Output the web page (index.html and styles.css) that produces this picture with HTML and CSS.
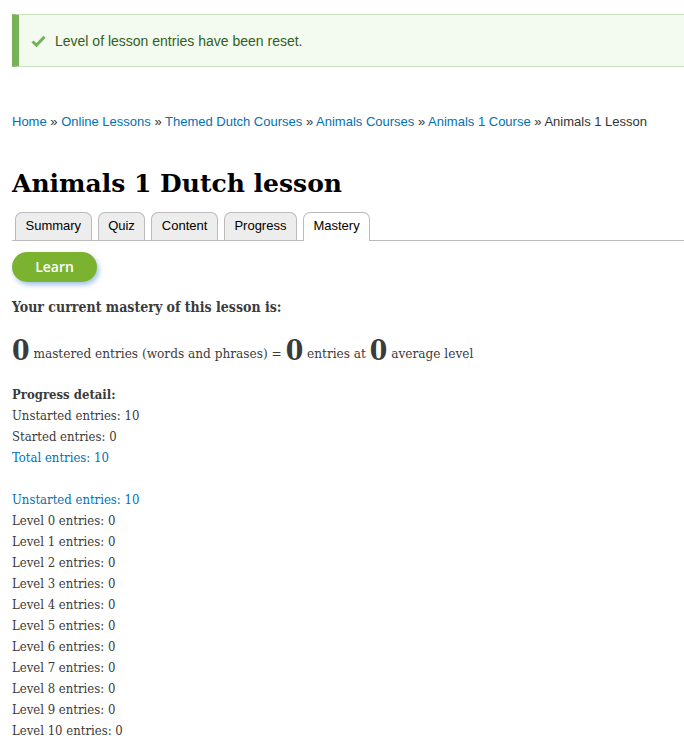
FILE: index.html
```html
<!DOCTYPE html>
<html>
<head>
<meta charset="utf-8">
<link rel="stylesheet" href="styles.css">
</head>
<body>
<div class="page">
  <div class="messages">
    <svg class="check" width="15" height="12" viewBox="0 0 15 12"><path d="M1.5 6.5 L5.5 10.2 L13.5 1.8" fill="none" stroke="#73b355" stroke-width="3"/></svg>
    <span>Level of lesson entries have been reset.</span>
  </div>
  <nav class="breadcrumb">
    <a href="#">Home</a> » <a href="#">Online Lessons</a> » <a href="#">Themed Dutch Courses</a> » <a href="#">Animals Courses</a> » <a href="#">Animals 1 Course</a> » <span>Animals 1 Lesson</span>
  </nav>
  <h1 class="title">Animals 1 Dutch lesson</h1>
  <ul class="tabs">
    <li class="tab">Summary</li>
    <li class="tab">Quiz</li>
    <li class="tab">Content</li>
    <li class="tab">Progress</li>
    <li class="tab active">Mastery</li>
  </ul>
  <div class="actions"><a class="learn" href="#">Learn</a></div>
  <p class="mastery-head">Your current mastery of this lesson is:</p>
  <p class="mastery"><span class="big">0</span> mastered entries (words and phrases) = <span class="big">0</span> entries at <span class="big">0</span> average level</p>
  <div class="detail">
    <div class="bold">Progress detail:</div>
    <div>Unstarted entries: 10</div>
    <div>Started entries: 0</div>
    <div class="link">Total entries: 10</div>
    <div class="blank"></div>
    <div class="link">Unstarted entries: 10</div>
    <div>Level 0 entries: 0</div>
    <div>Level 1 entries: 0</div>
    <div>Level 2 entries: 0</div>
    <div>Level 3 entries: 0</div>
    <div>Level 4 entries: 0</div>
    <div>Level 5 entries: 0</div>
    <div>Level 6 entries: 0</div>
    <div>Level 7 entries: 0</div>
    <div>Level 8 entries: 0</div>
    <div>Level 9 entries: 0</div>
    <div>Level 10 entries: 0</div>
  </div>
</div>
</body>
</html>
```
FILE: styles.css
```css
html, body { margin: 0; padding: 0; background: #fff; overflow: hidden; }
body {
  font-family: "DejaVu Serif Condensed", "DejaVu Serif", Georgia, serif;
  font-stretch: condensed;
  font-size: 13px; color: #3b3b3b;
}
.page { padding: 14px 0 0 12px; }
.messages {
  display: flex; align-items: center; gap: 9px;
  height: 51px; box-sizing: content-box;
  margin-right: -20px;
  background: #f3faef;
  border: 1px solid #c9e1bd;
  border-left: 7px solid #77b259;
  padding-left: 12px;
  font-family: "Liberation Sans", Arial, sans-serif; font-size: 14px; color: #325e1c;
  font-stretch: normal;
}
.check { display: block; }
.breadcrumb {
  margin-top: 45px;
  font-family: "Liberation Sans", Arial, sans-serif; font-size: 13px; color: #333;
  font-stretch: normal;
  line-height: 20px; white-space: nowrap;
}
.breadcrumb a { color: #0071b3; text-decoration: none; }
.title {
  margin: 35px 0 0 0;
  font-family: "DejaVu Serif", Georgia, serif; font-stretch: normal;
  font-size: 25px; line-height: 34px; color: #000; font-weight: bold;
}
.tabs {
  list-style: none; margin: 11px 0 0 0; padding: 0 0 0 3px;
  display: flex; gap: 6px;
  border-bottom: 1px solid #bbb;
  font-family: "Liberation Sans", Arial, sans-serif; font-size: 13px; color: #000;
  font-stretch: normal;
}
.tab {
  height: 27px; line-height: 25px; padding: 0 9.5px;
  background: #ededed;
  border: 1px solid #bbb; border-bottom: none;
  border-radius: 7px 7px 0 0;
}
.tab.active { background: #fff; margin-bottom: -1px; height: 28px; }
.actions { margin-top: 11px; }
.learn {
  display: inline-block; width: 85px; height: 30px; line-height: 30px;
  text-align: center; border-radius: 15px;
  background: #7bb330; color: #fff; text-decoration: none;
  font-family: "Open Sans", Arial, sans-serif; font-size: 14px; font-weight: 600;
  font-stretch: normal;
  box-shadow: 2px 3px 5px rgba(90, 150, 210, 0.55);
}
.mastery-head { margin: 15px 0 0 0; font-weight: bold; line-height: 21px; font-size: 14px; }
.mastery { margin: 18px 0 0 0; line-height: 30px; font-size: 13.5px; }
.big { font-size: 28px; font-weight: bold; vertical-align: -2px; }
.detail { margin-top: 16px; line-height: 21px; }
.bold { font-weight: bold; }
.link { color: #0071b3; }
.blank { height: 21px; }
```
